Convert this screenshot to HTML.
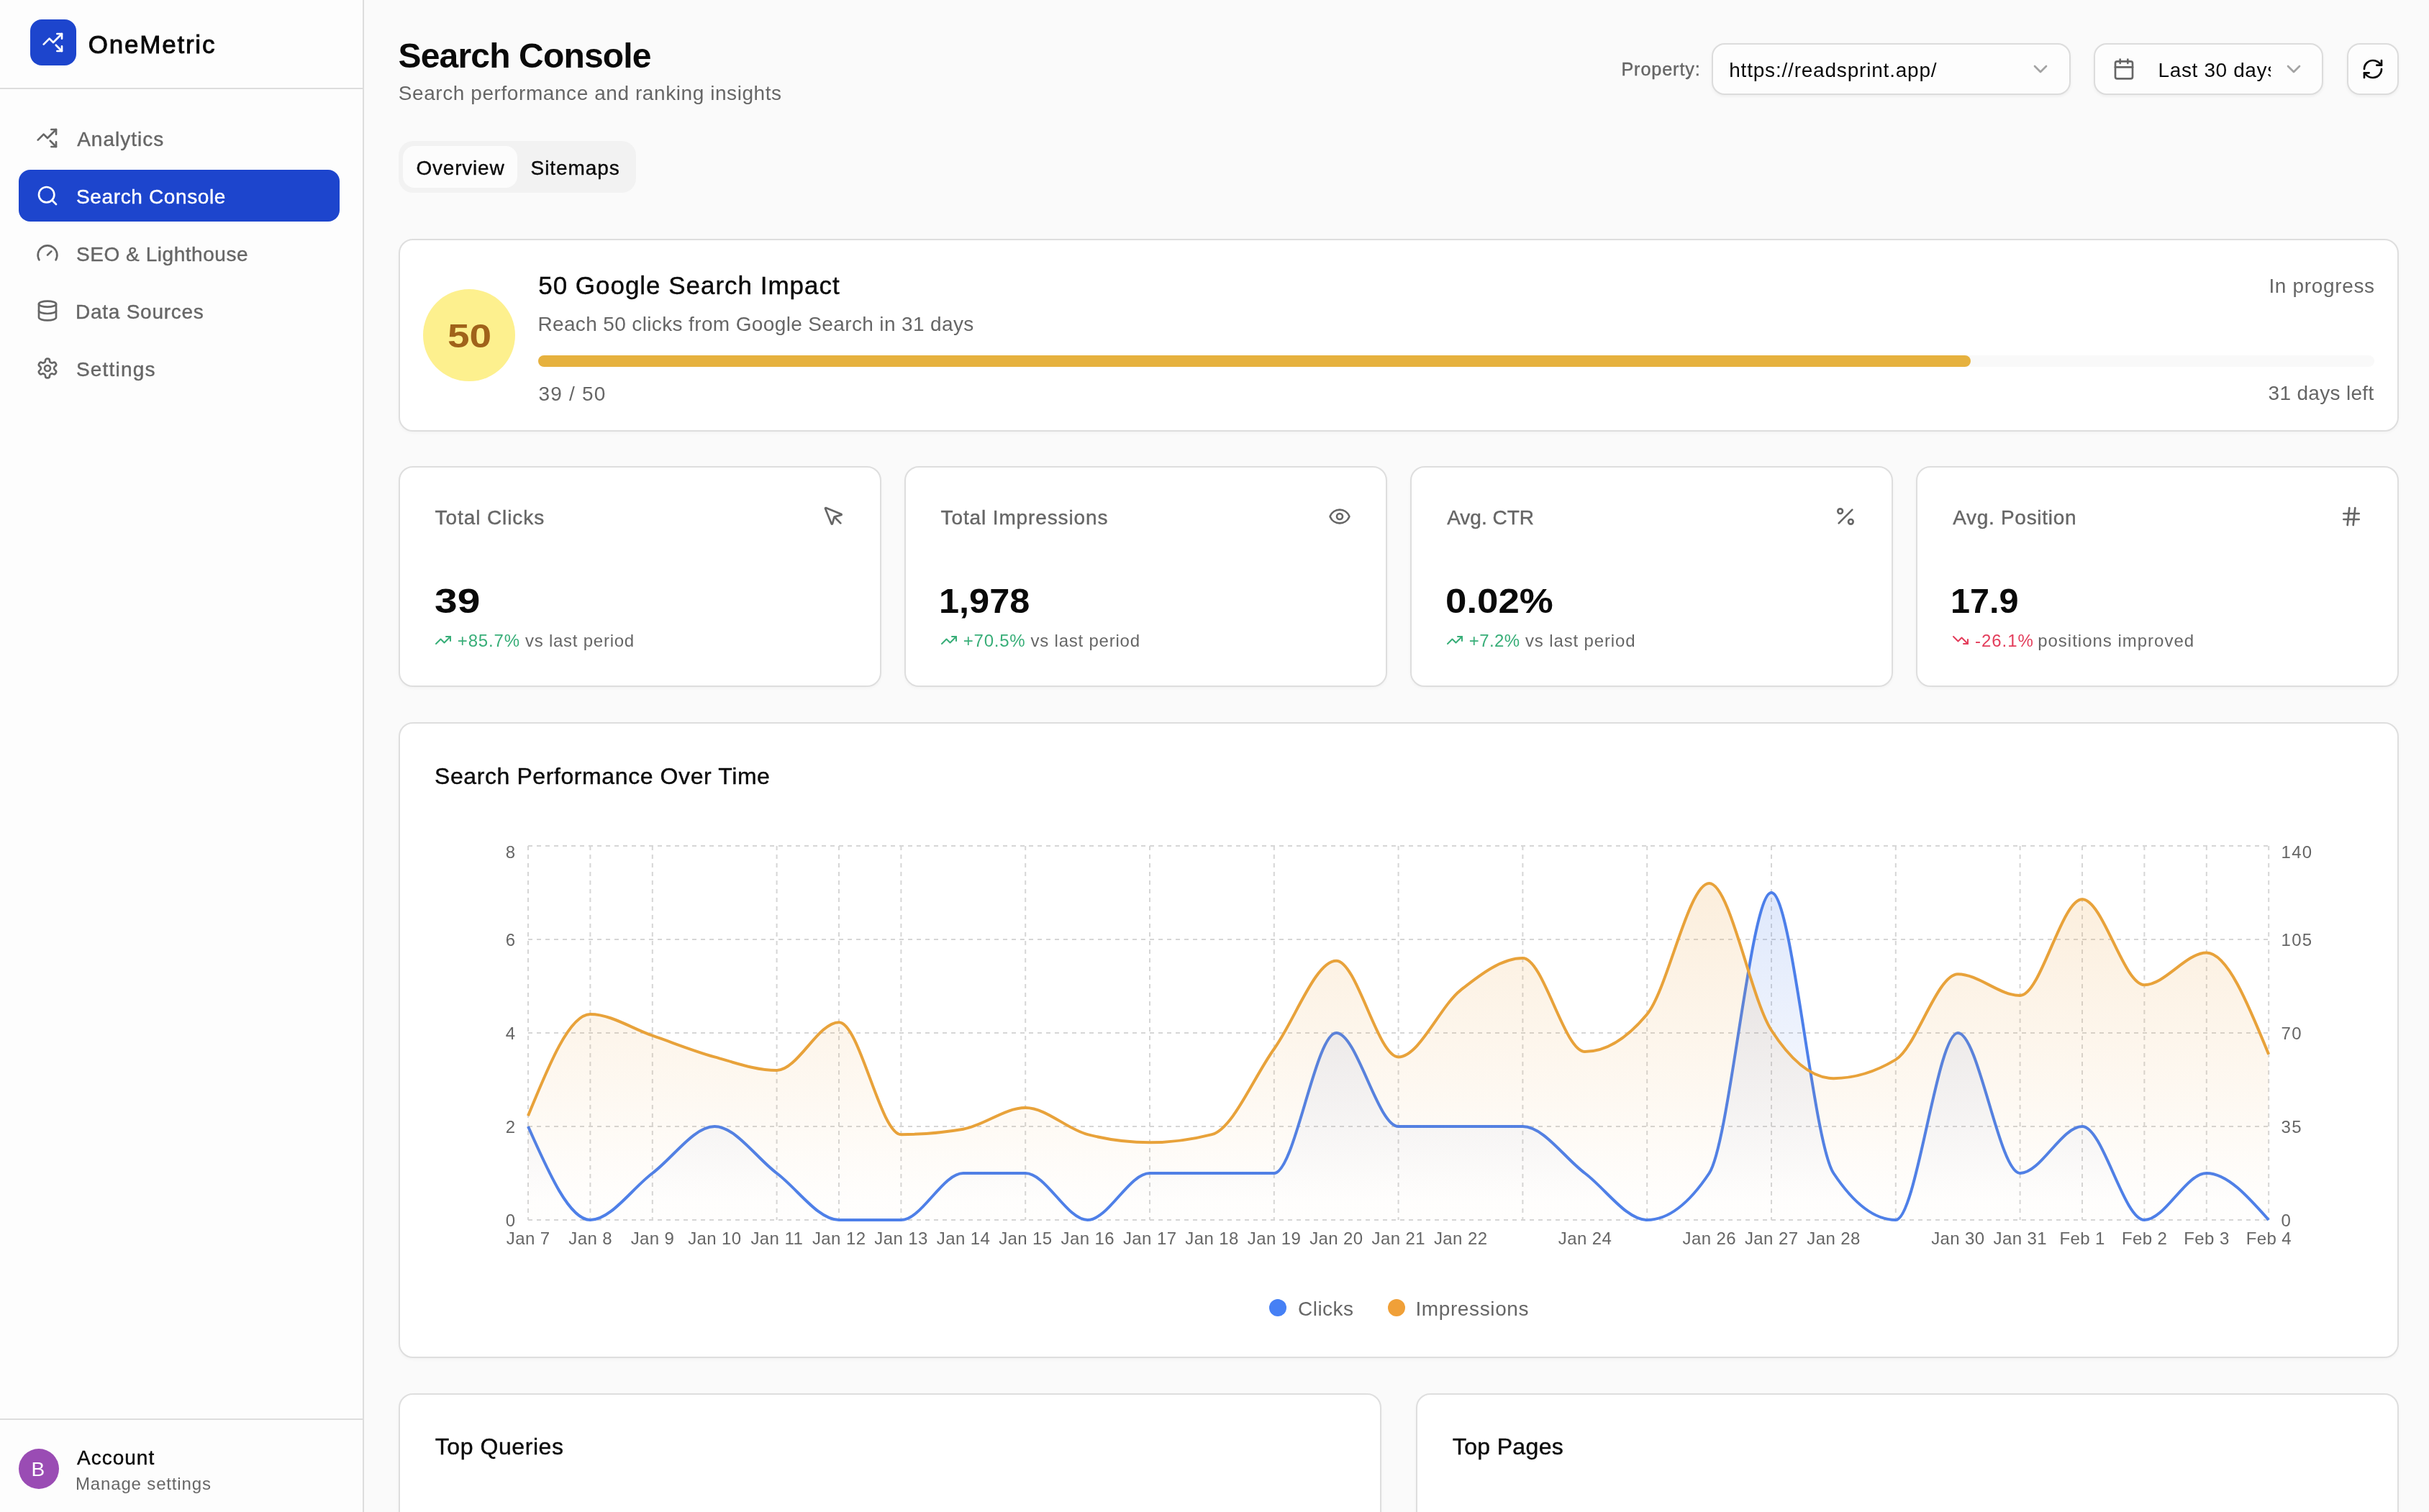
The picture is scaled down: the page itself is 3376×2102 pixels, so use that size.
<!DOCTYPE html>
<html><head><meta charset="utf-8"><title>Search Console</title>
<style>
html,body{margin:0;padding:0;background:#fafafa;overflow:hidden}
body{width:3376px;height:2102px}
#root{position:relative;will-change:transform;width:1688px;height:1051px;zoom:2;overflow:hidden;background:#fafafa;font-family:"Liberation Sans",sans-serif}
.box{position:absolute;box-sizing:border-box}
.t{position:absolute;white-space:nowrap}
.ic{position:absolute}
.ic svg{display:block}
.card{background:#ffffff;border:1px solid #dedede;border-radius:10px;box-shadow:0 1px 2px rgba(0,0,0,0.03)}
.btn{background:#fdfdfd;border:1px solid #dcdcdc;border-radius:9px;box-shadow:0 1px 2px rgba(0,0,0,0.05)}
.chart{position:absolute;left:0;top:0;overflow:visible}
@media (max-width:2500px){body{width:1688px;height:1051px}#root{zoom:1}}
</style></head>
<body><div id="root">
<div class="box" style="left:0;top:0;width:253px;height:1051px;background:#fdfdfd;border-right:1px solid #dddddd"></div>
<div class="box" style="left:0;top:61px;width:252px;height:1px;background:#dddddd"></div>
<div class="box" style="left:21px;top:13.5px;width:32px;height:32px;background:#1d45cd;border-radius:8px"></div>
<div class="ic" style="left:29.00px;top:21.50px;width:16px;height:16px;color:#ffffff"><svg width="16" height="16" viewBox="0 0 24 24" fill="none" stroke="currentColor" stroke-width="2" stroke-linecap="round" stroke-linejoin="round" ><path d="M14.828 14.828 21 21"/><path d="M21 16v5h-5"/><path d="m21 3-9 9-4-4-6 6"/><path d="M21 8V3h-5"/></svg></div>
<div class="t" style="left:61.40px;top:21.99px;font-size:17.5px;line-height:17.5px;color:#0a0a0a;font-weight:400;letter-spacing:0.887px;-webkit-text-stroke:0.45px currentColor;">OneMetric</div>
<div class="ic" style="left:25.00px;top:88.00px;width:16px;height:16px;color:#666666"><svg width="16" height="16" viewBox="0 0 24 24" fill="none" stroke="currentColor" stroke-width="2" stroke-linecap="round" stroke-linejoin="round" ><path d="M14.828 14.828 21 21"/><path d="M21 16v5h-5"/><path d="m21 3-9 9-4-4-6 6"/><path d="M21 8V3h-5"/></svg></div>
<div class="t" style="left:53.60px;top:89.75px;font-size:14px;line-height:14px;color:#666666;font-weight:400;letter-spacing:0.500px;-webkit-text-stroke:0.2px currentColor;">Analytics</div>
<div class="box" style="left:13px;top:118px;width:223px;height:36px;background:#1d45cd;border-radius:8px"></div>
<div class="ic" style="left:25.00px;top:128.00px;width:16px;height:16px;color:#ffffff"><svg width="16" height="16" viewBox="0 0 24 24" fill="none" stroke="currentColor" stroke-width="2" stroke-linecap="round" stroke-linejoin="round" ><circle cx="11" cy="11" r="8"/><path d="m21 21-4.34-4.34"/></svg></div>
<div class="t" style="left:53.00px;top:129.75px;font-size:14px;line-height:14px;color:#ffffff;font-weight:400;letter-spacing:0.315px;-webkit-text-stroke:0.2px currentColor;">Search Console</div>
<div class="ic" style="left:25.00px;top:168.00px;width:16px;height:16px;color:#666666"><svg width="16" height="16" viewBox="0 0 24 24" fill="none" stroke="currentColor" stroke-width="2" stroke-linecap="round" stroke-linejoin="round" ><path d="m12 14 4-4"/><path d="M3.34 19a10 10 0 1 1 17.32 0"/></svg></div>
<div class="t" style="left:53.00px;top:169.75px;font-size:14px;line-height:14px;color:#666666;font-weight:400;letter-spacing:0.273px;-webkit-text-stroke:0.2px currentColor;">SEO &amp; Lighthouse</div>
<div class="ic" style="left:25.00px;top:208.00px;width:16px;height:16px;color:#666666"><svg width="16" height="16" viewBox="0 0 24 24" fill="none" stroke="currentColor" stroke-width="2" stroke-linecap="round" stroke-linejoin="round" ><ellipse cx="12" cy="5" rx="9" ry="3"/><path d="M3 5V19A9 3 0 0 0 21 19V5"/><path d="M3 12A9 3 0 0 0 21 12"/></svg></div>
<div class="t" style="left:52.50px;top:209.75px;font-size:14px;line-height:14px;color:#666666;font-weight:400;letter-spacing:0.373px;-webkit-text-stroke:0.2px currentColor;">Data Sources</div>
<div class="ic" style="left:25.00px;top:248.00px;width:16px;height:16px;color:#666666"><svg width="16" height="16" viewBox="0 0 24 24" fill="none" stroke="currentColor" stroke-width="2" stroke-linecap="round" stroke-linejoin="round" ><path d="M12.22 2h-.44a2 2 0 0 0-2 2v.18a2 2 0 0 1-1 1.73l-.43.25a2 2 0 0 1-2 0l-.15-.08a2 2 0 0 0-2.73.73l-.22.38a2 2 0 0 0 .73 2.73l.15.1a2 2 0 0 1 1 1.72v.51a2 2 0 0 1-1 1.74l-.15.09a2 2 0 0 0-.73 2.73l.22.38a2 2 0 0 0 2.73.73l.15-.08a2 2 0 0 1 2 0l.43.25a2 2 0 0 1 1 1.73V20a2 2 0 0 0 2 2h.44a2 2 0 0 0 2-2v-.18a2 2 0 0 1 1-1.73l.43-.25a2 2 0 0 1 2 0l.15.08a2 2 0 0 0 2.73-.73l.22-.39a2 2 0 0 0-.73-2.73l-.15-.08a2 2 0 0 1-1-1.74v-.5a2 2 0 0 1 1-1.74l.15-.09a2 2 0 0 0 .73-2.73l-.22-.38a2 2 0 0 0-2.73-.73l-.15.08a2 2 0 0 1-2 0l-.43-.25a2 2 0 0 1-1-1.73V4a2 2 0 0 0-2-2z"/><circle cx="12" cy="12" r="3"/></svg></div>
<div class="t" style="left:53.00px;top:249.75px;font-size:14px;line-height:14px;color:#666666;font-weight:400;letter-spacing:0.586px;-webkit-text-stroke:0.2px currentColor;">Settings</div>
<div class="box" style="left:0;top:986px;width:252px;height:1px;background:#dddddd"></div>
<div class="box" style="left:13px;top:1007px;width:28px;height:28px;background:#9a4cb4;border-radius:50%"></div>
<div class="t" style="left:21.70px;top:1014.35px;font-size:14px;line-height:14px;color:#ffffff;font-weight:400;">B</div>
<div class="t" style="left:53.50px;top:1006.65px;font-size:14px;line-height:14px;color:#0a0a0a;font-weight:400;letter-spacing:0.500px;-webkit-text-stroke:0.2px currentColor;">Account</div>
<div class="t" style="left:52.50px;top:1025.44px;font-size:12px;line-height:12px;color:#666666;font-weight:400;letter-spacing:0.421px;">Manage settings</div>
<div class="t" style="left:276.80px;top:27.08px;font-size:24px;line-height:24px;color:#0a0a0a;font-weight:700;letter-spacing:-0.423px;">Search Console</div>
<div class="t" style="left:276.90px;top:57.75px;font-size:14px;line-height:14px;color:#666666;font-weight:400;letter-spacing:0.287px;">Search performance and ranking insights</div>
<div class="box" style="left:277px;top:98px;width:165px;height:36px;background:#f2f2f2;border-radius:10px"></div>
<div class="box" style="left:280px;top:101.5px;width:79.5px;height:29px;background:#fcfcfc;border-radius:8px"></div>
<div class="t" style="left:289.20px;top:110.05px;font-size:14px;line-height:14px;color:#0a0a0a;font-weight:400;letter-spacing:0.400px;-webkit-text-stroke:0.2px currentColor;">Overview</div>
<div class="t" style="left:368.80px;top:110.05px;font-size:14px;line-height:14px;color:#0a0a0a;font-weight:400;letter-spacing:0.457px;-webkit-text-stroke:0.2px currentColor;">Sitemaps</div>
<div class="t" style="left:1126.70px;top:42.18px;font-size:12.6px;line-height:12.6px;color:#666666;font-weight:400;letter-spacing:0.450px;-webkit-text-stroke:0.2px currentColor;">Property:</div>
<div class="box btn" style="left:1189.5px;top:30px;width:249.5px;height:36px"></div>
<div class="t" style="left:1201.60px;top:41.95px;font-size:14px;line-height:14px;color:#0a0a0a;font-weight:400;letter-spacing:0.400px;">https://readsprint.app/</div>
<div class="ic" style="left:1410.00px;top:40.00px;width:16px;height:16px;color:#a3a3a3"><svg width="16" height="16" viewBox="0 0 24 24" fill="none" stroke="currentColor" stroke-width="2" stroke-linecap="round" stroke-linejoin="round" ><path d="m6 9 6 6 6-6"/></svg></div>
<div class="box btn" style="left:1455px;top:30px;width:159.5px;height:36px"></div>
<div class="ic" style="left:1468.00px;top:40.00px;width:16px;height:16px;color:#666666"><svg width="16" height="16" viewBox="0 0 24 24" fill="none" stroke="currentColor" stroke-width="2" stroke-linecap="round" stroke-linejoin="round" ><path d="M8 2v4"/><path d="M16 2v4"/><rect width="18" height="18" x="3" y="4" rx="2"/><path d="M3 10h18"/></svg></div>
<div class="box" style="left:1490px;top:36px;width:88px;height:24px;overflow:hidden"><div class="t" style="left:9.80px;top:5.95px;font-size:14px;line-height:14px;color:#0a0a0a;font-weight:400;letter-spacing:0.310px;">Last 30 days</div></div>
<div class="ic" style="left:1586.00px;top:40.00px;width:16px;height:16px;color:#a3a3a3"><svg width="16" height="16" viewBox="0 0 24 24" fill="none" stroke="currentColor" stroke-width="2" stroke-linecap="round" stroke-linejoin="round" ><path d="m6 9 6 6 6-6"/></svg></div>
<div class="box btn" style="left:1631px;top:30px;width:36px;height:36px"></div>
<div class="ic" style="left:1641.00px;top:40.00px;width:16px;height:16px;color:#0a0a0a"><svg width="16" height="16" viewBox="0 0 24 24" fill="none" stroke="currentColor" stroke-width="2" stroke-linecap="round" stroke-linejoin="round" ><path d="M3 12a9 9 0 0 1 9-9 9.75 9.75 0 0 1 6.74 2.74L21 8"/><path d="M21 3v5h-5"/><path d="M21 12a9 9 0 0 1-9 9 9.75 9.75 0 0 1-6.74-2.74L3 16"/><path d="M8 16H3v5"/></svg></div>
<div class="box card" style="left:277px;top:166px;width:1390px;height:134px"></div>
<div class="box" style="left:294px;top:201px;width:64px;height:64px;background:#fdf08e;border-radius:50%"></div>
<div class="t" style="left:311.06px;top:222.13px;font-size:23px;line-height:23px;color:#a0621a;font-weight:700;transform:scaleX(1.1958);transform-origin:0 0;">50</div>
<div class="t" style="left:374.10px;top:189.49px;font-size:17.5px;line-height:17.5px;color:#0a0a0a;font-weight:400;letter-spacing:0.491px;-webkit-text-stroke:0.2px currentColor;">50 Google Search Impact</div>
<div class="t" style="left:373.70px;top:218.65px;font-size:14px;line-height:14px;color:#666666;font-weight:400;letter-spacing:0.182px;">Reach 50 clicks from Google Search in 31 days</div>
<div class="box" style="left:374px;top:247px;width:1276px;height:8px;background:#f9f9f9;border-radius:4px"></div>
<div class="box" style="left:374px;top:247px;width:995.5px;height:8px;background:#e6b13e;border-radius:4px"></div>
<div class="t" style="left:374.30px;top:266.75px;font-size:14px;line-height:14px;color:#666666;font-weight:400;letter-spacing:0.600px;">39 / 50</div>
<div class="t" style="left:1576.70px;top:192.15px;font-size:14px;line-height:14px;color:#666666;font-weight:400;letter-spacing:0.330px;">In progress</div>
<div class="t" style="left:1576.30px;top:266.35px;font-size:14px;line-height:14px;color:#666666;font-weight:400;letter-spacing:0.155px;">31 days left</div>
<div class="box card" style="left:277.00px;top:324px;width:335.5px;height:153.5px"></div>
<div class="t" style="left:302.30px;top:352.75px;font-size:14px;line-height:14px;color:#666666;font-weight:400;letter-spacing:0.455px;-webkit-text-stroke:0.2px currentColor;">Total Clicks</div>
<div class="ic" style="left:571.50px;top:351.00px;width:16px;height:16px;color:#666666"><svg width="16" height="16" viewBox="0 0 24 24" fill="none" stroke="currentColor" stroke-width="2" stroke-linecap="round" stroke-linejoin="round" ><path d="M12.586 12.586 19 19"/><path d="M3.688 3.037a.497.497 0 0 0-.651.651l6.5 15.999a.501.501 0 0 0 .947-.062l1.569-6.083a2 2 0 0 1 1.448-1.479l6.124-1.579a.5.5 0 0 0 .063-.947z"/></svg></div>
<div class="t" style="left:302.01px;top:406.08px;font-size:24px;line-height:24px;color:#0a0a0a;font-weight:700;transform:scaleX(1.1858);transform-origin:0 0;">39</div>
<div class="ic" style="left:302.00px;top:439.00px;width:12px;height:12px;color:#38ae78"><svg width="12" height="12" viewBox="0 0 24 24" fill="none" stroke="currentColor" stroke-width="2" stroke-linecap="round" stroke-linejoin="round" ><polyline points="22 7 13.5 15.5 8.5 10.5 2 17"/><polyline points="16 7 22 7 22 13"/></svg></div>
<div class="t" style="left:317.90px;top:439.34px;font-size:12px;line-height:12px;color:#38ae78;font-weight:400;letter-spacing:0.420px;">+85.7%</div>
<div class="t" style="left:365.00px;top:439.34px;font-size:12px;line-height:12px;color:#666666;font-weight:400;letter-spacing:0.377px;">vs last period</div>
<div class="box card" style="left:628.50px;top:324px;width:335.5px;height:153.5px"></div>
<div class="t" style="left:653.80px;top:352.75px;font-size:14px;line-height:14px;color:#666666;font-weight:400;letter-spacing:0.437px;-webkit-text-stroke:0.2px currentColor;">Total Impressions</div>
<div class="ic" style="left:923.00px;top:351.00px;width:16px;height:16px;color:#666666"><svg width="16" height="16" viewBox="0 0 24 24" fill="none" stroke="currentColor" stroke-width="2" stroke-linecap="round" stroke-linejoin="round" ><path d="M2.062 12.348a1 1 0 0 1 0-.696 10.75 10.75 0 0 1 19.876 0 1 1 0 0 1 0 .696 10.75 10.75 0 0 1-19.876 0"/><circle cx="12" cy="12" r="3"/></svg></div>
<div class="t" style="left:652.52px;top:406.08px;font-size:24px;line-height:24px;color:#0a0a0a;font-weight:700;transform:scaleX(1.0519);transform-origin:0 0;">1,978</div>
<div class="ic" style="left:653.50px;top:439.00px;width:12px;height:12px;color:#38ae78"><svg width="12" height="12" viewBox="0 0 24 24" fill="none" stroke="currentColor" stroke-width="2" stroke-linecap="round" stroke-linejoin="round" ><polyline points="22 7 13.5 15.5 8.5 10.5 2 17"/><polyline points="16 7 22 7 22 13"/></svg></div>
<div class="t" style="left:669.40px;top:439.34px;font-size:12px;line-height:12px;color:#38ae78;font-weight:400;letter-spacing:0.380px;">+70.5%</div>
<div class="t" style="left:716.30px;top:439.34px;font-size:12px;line-height:12px;color:#666666;font-weight:400;letter-spacing:0.385px;">vs last period</div>
<div class="box card" style="left:980.00px;top:324px;width:335.5px;height:153.5px"></div>
<div class="t" style="left:1005.60px;top:352.75px;font-size:14px;line-height:14px;color:#666666;font-weight:400;-webkit-text-stroke:0.2px currentColor;">Avg. CTR</div>
<div class="ic" style="left:1274.50px;top:351.00px;width:16px;height:16px;color:#666666"><svg width="16" height="16" viewBox="0 0 24 24" fill="none" stroke="currentColor" stroke-width="2" stroke-linecap="round" stroke-linejoin="round" ><line x1="19" x2="5" y1="5" y2="19"/><circle cx="6.5" cy="6.5" r="2.5"/><circle cx="17.5" cy="17.5" r="2.5"/></svg></div>
<div class="t" style="left:1004.61px;top:406.08px;font-size:24px;line-height:24px;color:#0a0a0a;font-weight:700;transform:scaleX(1.1008);transform-origin:0 0;">0.02%</div>
<div class="ic" style="left:1005.00px;top:439.00px;width:12px;height:12px;color:#38ae78"><svg width="12" height="12" viewBox="0 0 24 24" fill="none" stroke="currentColor" stroke-width="2" stroke-linecap="round" stroke-linejoin="round" ><polyline points="22 7 13.5 15.5 8.5 10.5 2 17"/><polyline points="16 7 22 7 22 13"/></svg></div>
<div class="t" style="left:1020.90px;top:439.34px;font-size:12px;line-height:12px;color:#38ae78;font-weight:400;letter-spacing:0.200px;">+7.2%</div>
<div class="t" style="left:1060.00px;top:439.34px;font-size:12px;line-height:12px;color:#666666;font-weight:400;letter-spacing:0.431px;">vs last period</div>
<div class="box card" style="left:1331.50px;top:324px;width:335.5px;height:153.5px"></div>
<div class="t" style="left:1357.10px;top:352.75px;font-size:14px;line-height:14px;color:#666666;font-weight:400;letter-spacing:0.350px;-webkit-text-stroke:0.2px currentColor;">Avg. Position</div>
<div class="ic" style="left:1626.00px;top:351.00px;width:16px;height:16px;color:#666666"><svg width="16" height="16" viewBox="0 0 24 24" fill="none" stroke="currentColor" stroke-width="2" stroke-linecap="round" stroke-linejoin="round" ><line x1="4" x2="20" y1="9" y2="9"/><line x1="4" x2="20" y1="15" y2="15"/><line x1="10" x2="8" y1="3" y2="21"/><line x1="16" x2="14" y1="3" y2="21"/></svg></div>
<div class="t" style="left:1355.58px;top:406.08px;font-size:24px;line-height:24px;color:#0a0a0a;font-weight:700;transform:scaleX(1.0113);transform-origin:0 0;">17.9</div>
<div class="ic" style="left:1356.50px;top:439.00px;width:12px;height:12px;color:#e33d5b"><svg width="12" height="12" viewBox="0 0 24 24" fill="none" stroke="currentColor" stroke-width="2" stroke-linecap="round" stroke-linejoin="round" ><polyline points="22 17 13.5 8.5 8.5 13.5 2 7"/><polyline points="16 17 22 17 22 11"/></svg></div>
<div class="t" style="left:1372.50px;top:439.34px;font-size:12px;line-height:12px;color:#e33d5b;font-weight:400;letter-spacing:0.480px;">-26.1%</div>
<div class="t" style="left:1416.10px;top:439.34px;font-size:12px;line-height:12px;color:#666666;font-weight:400;letter-spacing:0.494px;">positions improved</div>
<div class="box card" style="left:277px;top:502px;width:1390px;height:442px"></div>
<div class="t" style="left:302.00px;top:531.46px;font-size:16px;line-height:16px;color:#0a0a0a;font-weight:400;letter-spacing:0.296px;-webkit-text-stroke:0.2px currentColor;">Search Performance Over Time</div>
<svg class="chart" width="1688" height="1051" viewBox="0 0 1688 1051">
<defs><linearGradient id="gc" x1="0" y1="0" x2="0" y2="1"><stop offset="5%" stop-color="#4c7fea" stop-opacity="0.17"/><stop offset="95%" stop-color="#4c7fea" stop-opacity="0"/></linearGradient><linearGradient id="gi" x1="0" y1="0" x2="0" y2="1"><stop offset="5%" stop-color="#eba03c" stop-opacity="0.17"/><stop offset="95%" stop-color="#eba03c" stop-opacity="0.012"/></linearGradient></defs>
<g stroke="#d6d6d6" stroke-width="1" stroke-dasharray="3 3" fill="none">
<line x1="367.00" y1="588.00" x2="1576.60" y2="588.00"/>
<line x1="367.00" y1="653.00" x2="1576.60" y2="653.00"/>
<line x1="367.00" y1="718.00" x2="1576.60" y2="718.00"/>
<line x1="367.00" y1="783.00" x2="1576.60" y2="783.00"/>
<line x1="367.00" y1="848.00" x2="1576.60" y2="848.00"/>
<line x1="367.00" y1="588.00" x2="367.00" y2="848.00"/>
<line x1="410.20" y1="588.00" x2="410.20" y2="848.00"/>
<line x1="453.40" y1="588.00" x2="453.40" y2="848.00"/>
<line x1="539.80" y1="588.00" x2="539.80" y2="848.00"/>
<line x1="583.00" y1="588.00" x2="583.00" y2="848.00"/>
<line x1="626.20" y1="588.00" x2="626.20" y2="848.00"/>
<line x1="712.60" y1="588.00" x2="712.60" y2="848.00"/>
<line x1="799.00" y1="588.00" x2="799.00" y2="848.00"/>
<line x1="885.40" y1="588.00" x2="885.40" y2="848.00"/>
<line x1="971.80" y1="588.00" x2="971.80" y2="848.00"/>
<line x1="1058.20" y1="588.00" x2="1058.20" y2="848.00"/>
<line x1="1144.60" y1="588.00" x2="1144.60" y2="848.00"/>
<line x1="1231.00" y1="588.00" x2="1231.00" y2="848.00"/>
<line x1="1317.40" y1="588.00" x2="1317.40" y2="848.00"/>
<line x1="1403.80" y1="588.00" x2="1403.80" y2="848.00"/>
<line x1="1447.00" y1="588.00" x2="1447.00" y2="848.00"/>
<line x1="1490.20" y1="588.00" x2="1490.20" y2="848.00"/>
<line x1="1533.40" y1="588.00" x2="1533.40" y2="848.00"/>
<line x1="1576.60" y1="588.00" x2="1576.60" y2="848.00"/>
</g>
<path d="M367.00,783.00C381.40,815.50,395.80,848.00,410.20,848.00C424.60,848.00,439.00,826.33,453.40,815.50C467.80,804.67,482.20,783.00,496.60,783.00C511.00,783.00,525.40,804.67,539.80,815.50C554.20,826.33,568.60,848.00,583.00,848.00C597.40,848.00,611.80,848.00,626.20,848.00C640.60,848.00,655.00,815.50,669.40,815.50C683.80,815.50,698.20,815.50,712.60,815.50C727.00,815.50,741.40,848.00,755.80,848.00C770.20,848.00,784.60,815.50,799.00,815.50C813.40,815.50,827.80,815.50,842.20,815.50C856.60,815.50,871.00,815.50,885.40,815.50C899.80,815.50,914.20,718.00,928.60,718.00C943.00,718.00,957.40,783.00,971.80,783.00C986.20,783.00,1000.60,783.00,1015.00,783.00C1029.40,783.00,1043.80,783.00,1058.20,783.00C1072.60,783.00,1087.00,804.67,1101.40,815.50C1115.80,826.33,1130.20,848.00,1144.60,848.00C1159.00,848.00,1173.40,837.17,1187.80,815.50C1202.20,793.83,1216.60,620.50,1231.00,620.50C1245.40,620.50,1259.80,793.83,1274.20,815.50C1288.60,837.17,1303.00,848.00,1317.40,848.00C1331.80,848.00,1346.20,718.00,1360.60,718.00C1375.00,718.00,1389.40,815.50,1403.80,815.50C1418.20,815.50,1432.60,783.00,1447.00,783.00C1461.40,783.00,1475.80,848.00,1490.20,848.00C1504.60,848.00,1519.00,815.50,1533.40,815.50C1547.80,815.50,1562.20,831.75,1576.60,848.00L1576.60,848.00L367.00,848.00Z" fill="url(#gc)" stroke="none"/>
<path d="M367.00,783.00C381.40,815.50,395.80,848.00,410.20,848.00C424.60,848.00,439.00,826.33,453.40,815.50C467.80,804.67,482.20,783.00,496.60,783.00C511.00,783.00,525.40,804.67,539.80,815.50C554.20,826.33,568.60,848.00,583.00,848.00C597.40,848.00,611.80,848.00,626.20,848.00C640.60,848.00,655.00,815.50,669.40,815.50C683.80,815.50,698.20,815.50,712.60,815.50C727.00,815.50,741.40,848.00,755.80,848.00C770.20,848.00,784.60,815.50,799.00,815.50C813.40,815.50,827.80,815.50,842.20,815.50C856.60,815.50,871.00,815.50,885.40,815.50C899.80,815.50,914.20,718.00,928.60,718.00C943.00,718.00,957.40,783.00,971.80,783.00C986.20,783.00,1000.60,783.00,1015.00,783.00C1029.40,783.00,1043.80,783.00,1058.20,783.00C1072.60,783.00,1087.00,804.67,1101.40,815.50C1115.80,826.33,1130.20,848.00,1144.60,848.00C1159.00,848.00,1173.40,837.17,1187.80,815.50C1202.20,793.83,1216.60,620.50,1231.00,620.50C1245.40,620.50,1259.80,793.83,1274.20,815.50C1288.60,837.17,1303.00,848.00,1317.40,848.00C1331.80,848.00,1346.20,718.00,1360.60,718.00C1375.00,718.00,1389.40,815.50,1403.80,815.50C1418.20,815.50,1432.60,783.00,1447.00,783.00C1461.40,783.00,1475.80,848.00,1490.20,848.00C1504.60,848.00,1519.00,815.50,1533.40,815.50C1547.80,815.50,1562.20,831.75,1576.60,848.00" fill="none" stroke="#4c7fea" stroke-width="2"/>
<path d="M367.00,775.57C381.40,740.29,395.80,705.00,410.20,705.00C424.60,705.00,439.00,714.90,453.40,719.86C467.80,724.81,482.20,730.69,496.60,734.71C511.00,738.74,525.40,744.00,539.80,744.00C554.20,744.00,568.60,710.57,583.00,710.57C597.40,710.57,611.80,788.57,626.20,788.57C640.60,788.57,655.00,787.33,669.40,784.86C683.80,782.38,698.20,770.00,712.60,770.00C727.00,770.00,741.40,784.86,755.80,788.57C770.20,792.29,784.60,794.14,799.00,794.14C813.40,794.14,827.80,792.29,842.20,788.57C856.60,784.86,871.00,749.26,885.40,729.14C899.80,709.02,914.20,667.86,928.60,667.86C943.00,667.86,957.40,734.71,971.80,734.71C986.20,734.71,1000.60,699.74,1015.00,688.29C1029.40,676.83,1043.80,666.00,1058.20,666.00C1072.60,666.00,1087.00,731.00,1101.40,731.00C1115.80,731.00,1130.20,722.33,1144.60,705.00C1159.00,687.67,1173.40,614.00,1187.80,614.00C1202.20,614.00,1216.60,693.86,1231.00,716.14C1245.40,738.43,1259.80,749.57,1274.20,749.57C1288.60,749.57,1303.00,745.24,1317.40,736.57C1331.80,727.90,1346.20,677.14,1360.60,677.14C1375.00,677.14,1389.40,692.00,1403.80,692.00C1418.20,692.00,1432.60,625.14,1447.00,625.14C1461.40,625.14,1475.80,684.57,1490.20,684.57C1504.60,684.57,1519.00,662.29,1533.40,662.29C1547.80,662.29,1562.20,697.57,1576.60,732.86L1576.60,848.00L367.00,848.00Z" fill="url(#gi)" stroke="none"/>
<path d="M367.00,775.57C381.40,740.29,395.80,705.00,410.20,705.00C424.60,705.00,439.00,714.90,453.40,719.86C467.80,724.81,482.20,730.69,496.60,734.71C511.00,738.74,525.40,744.00,539.80,744.00C554.20,744.00,568.60,710.57,583.00,710.57C597.40,710.57,611.80,788.57,626.20,788.57C640.60,788.57,655.00,787.33,669.40,784.86C683.80,782.38,698.20,770.00,712.60,770.00C727.00,770.00,741.40,784.86,755.80,788.57C770.20,792.29,784.60,794.14,799.00,794.14C813.40,794.14,827.80,792.29,842.20,788.57C856.60,784.86,871.00,749.26,885.40,729.14C899.80,709.02,914.20,667.86,928.60,667.86C943.00,667.86,957.40,734.71,971.80,734.71C986.20,734.71,1000.60,699.74,1015.00,688.29C1029.40,676.83,1043.80,666.00,1058.20,666.00C1072.60,666.00,1087.00,731.00,1101.40,731.00C1115.80,731.00,1130.20,722.33,1144.60,705.00C1159.00,687.67,1173.40,614.00,1187.80,614.00C1202.20,614.00,1216.60,693.86,1231.00,716.14C1245.40,738.43,1259.80,749.57,1274.20,749.57C1288.60,749.57,1303.00,745.24,1317.40,736.57C1331.80,727.90,1346.20,677.14,1360.60,677.14C1375.00,677.14,1389.40,692.00,1403.80,692.00C1418.20,692.00,1432.60,625.14,1447.00,625.14C1461.40,625.14,1475.80,684.57,1490.20,684.57C1504.60,684.57,1519.00,662.29,1533.40,662.29C1547.80,662.29,1562.20,697.57,1576.60,732.86" fill="none" stroke="#e8a23a" stroke-width="2"/>
<g font-family="Liberation Sans, sans-serif" font-size="12" fill="#666666">
<text x="358" y="592.00" text-anchor="end" dy="0.355em">8</text>
<text x="358" y="653.00" text-anchor="end" dy="0.355em">6</text>
<text x="358" y="718.00" text-anchor="end" dy="0.355em">4</text>
<text x="358" y="783.00" text-anchor="end" dy="0.355em">2</text>
<text x="358" y="848.00" text-anchor="end" dy="0.355em">0</text>
<text x="1585.3" y="592.00" text-anchor="start" dy="0.355em" letter-spacing="0.6">140</text>
<text x="1585.3" y="653.00" text-anchor="start" dy="0.355em" letter-spacing="0.6">105</text>
<text x="1585.3" y="718.00" text-anchor="start" dy="0.355em" letter-spacing="0.6">70</text>
<text x="1585.3" y="783.00" text-anchor="start" dy="0.355em" letter-spacing="0.6">35</text>
<text x="1585.3" y="848.00" text-anchor="start" dy="0.355em" letter-spacing="0.6">0</text>
<text x="367.10" y="864.8" text-anchor="middle" letter-spacing="0.2">Jan 7</text>
<text x="410.30" y="864.8" text-anchor="middle" letter-spacing="0.2">Jan 8</text>
<text x="453.50" y="864.8" text-anchor="middle" letter-spacing="0.2">Jan 9</text>
<text x="496.70" y="864.8" text-anchor="middle" letter-spacing="0.2">Jan 10</text>
<text x="539.90" y="864.8" text-anchor="middle" letter-spacing="0.2">Jan 11</text>
<text x="583.10" y="864.8" text-anchor="middle" letter-spacing="0.2">Jan 12</text>
<text x="626.30" y="864.8" text-anchor="middle" letter-spacing="0.2">Jan 13</text>
<text x="669.50" y="864.8" text-anchor="middle" letter-spacing="0.2">Jan 14</text>
<text x="712.70" y="864.8" text-anchor="middle" letter-spacing="0.2">Jan 15</text>
<text x="755.90" y="864.8" text-anchor="middle" letter-spacing="0.2">Jan 16</text>
<text x="799.10" y="864.8" text-anchor="middle" letter-spacing="0.2">Jan 17</text>
<text x="842.30" y="864.8" text-anchor="middle" letter-spacing="0.2">Jan 18</text>
<text x="885.50" y="864.8" text-anchor="middle" letter-spacing="0.2">Jan 19</text>
<text x="928.70" y="864.8" text-anchor="middle" letter-spacing="0.2">Jan 20</text>
<text x="971.90" y="864.8" text-anchor="middle" letter-spacing="0.2">Jan 21</text>
<text x="1015.10" y="864.8" text-anchor="middle" letter-spacing="0.2">Jan 22</text>
<text x="1101.50" y="864.8" text-anchor="middle" letter-spacing="0.2">Jan 24</text>
<text x="1187.90" y="864.8" text-anchor="middle" letter-spacing="0.2">Jan 26</text>
<text x="1231.10" y="864.8" text-anchor="middle" letter-spacing="0.2">Jan 27</text>
<text x="1274.30" y="864.8" text-anchor="middle" letter-spacing="0.2">Jan 28</text>
<text x="1360.70" y="864.8" text-anchor="middle" letter-spacing="0.2">Jan 30</text>
<text x="1403.90" y="864.8" text-anchor="middle" letter-spacing="0.2">Jan 31</text>
<text x="1447.10" y="864.8" text-anchor="middle" letter-spacing="0.2">Feb 1</text>
<text x="1490.30" y="864.8" text-anchor="middle" letter-spacing="0.2">Feb 2</text>
<text x="1533.50" y="864.8" text-anchor="middle" letter-spacing="0.2">Feb 3</text>
<text x="1576.70" y="864.8" text-anchor="middle" letter-spacing="0.2">Feb 4</text>
</g>
</svg>
<div class="box" style="left:882px;top:903px;width:12px;height:12px;border-radius:50%;background:#4680f5"></div>
<div class="t" style="left:902.00px;top:902.75px;font-size:14px;line-height:14px;color:#666666;font-weight:400;letter-spacing:0.240px;">Clicks</div>
<div class="box" style="left:964.5px;top:903px;width:12px;height:12px;border-radius:50%;background:#f0a038"></div>
<div class="t" style="left:983.70px;top:902.75px;font-size:14px;line-height:14px;color:#666666;font-weight:400;letter-spacing:0.310px;">Impressions</div>
<div class="box card" style="left:277px;top:968.5px;width:683px;height:200px"></div>
<div class="box card" style="left:984px;top:968.5px;width:683px;height:200px"></div>
<div class="t" style="left:302.40px;top:997.36px;font-size:16px;line-height:16px;color:#0a0a0a;font-weight:400;letter-spacing:0.280px;-webkit-text-stroke:0.2px currentColor;">Top Queries</div>
<div class="t" style="left:1009.40px;top:997.36px;font-size:16px;line-height:16px;color:#0a0a0a;font-weight:400;letter-spacing:0.175px;-webkit-text-stroke:0.2px currentColor;">Top Pages</div>
</div></body></html>
